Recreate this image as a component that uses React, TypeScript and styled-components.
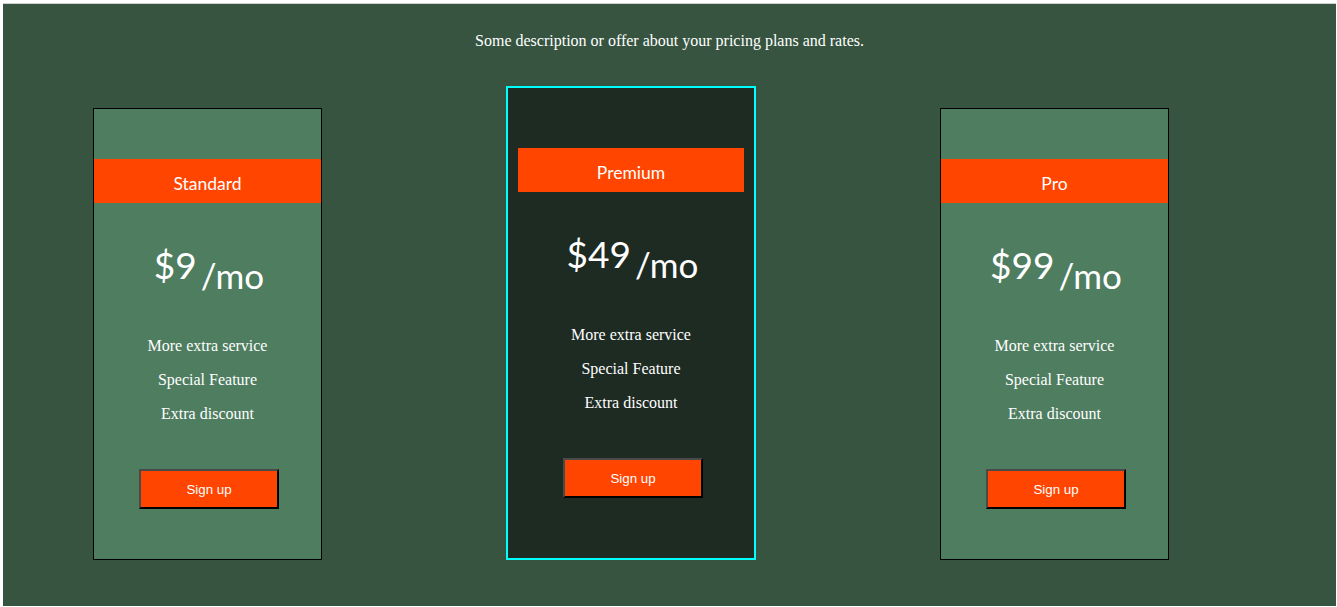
import React from "react";
import styled, { createGlobalStyle } from "styled-components";

const Global = createGlobalStyle`
  html, body { margin: 0; padding: 0; background: #ffffff; }
  body { padding: 3px 1px 1px 3px; }
  * { box-sizing: border-box; }
`;

const Section = styled.section`
  height: 603px;
  background: #365440;
  border-top: 1px solid #d0d0d0;
  display: flex;
  flex-direction: column;
  padding-top: 28px;
`;

const Description = styled.p`
  margin: 0;
  text-align: center;
  color: #ffffff;
  font-family: "Liberation Serif", "Times New Roman", serif;
  font-size: 16px;
  line-height: 18px;
`;

const Row = styled.div`
  display: flex;
  align-items: flex-end;
  gap: 184px;
  padding-left: 90px;
  margin-top: 36px;
`;

const Card = styled.div<{ $featured?: boolean }>`
  width: ${(p) => (p.$featured ? 250 : 229)}px;
  padding: ${(p) => (p.$featured ? "10px" : "0")};
  border: ${(p) => (p.$featured ? "2px solid #00ffff" : "1px solid #000000")};
  background: ${(p) => (p.$featured ? "#1e2b23" : "#4e7d5f")};
  display: flex;
  flex-direction: column;
  align-items: stretch;
`;

const Inner = styled.div`
  height: 450px;
  display: flex;
  flex-direction: column;
  align-items: stretch;
  padding-top: 50px;
`;

const Header = styled.div`
  height: 44px;
  padding-top: 6px;
  line-height: 38px;
  background: #ff4500;
  color: #ffffff;
  text-align: center;
  font-family: Lato, "Noto Sans", sans-serif;
  font-size: 17.5px;
`;

const Price = styled.div`
  margin-top: 39px;
  height: 87px;
  padding-left: 3px;
  text-align: center;
  color: #ffffff;
  font-family: Lato, "Noto Sans", sans-serif;
  font-size: 37px;
  line-height: 46px;
`;

const Per = styled.span`
  vertical-align: -10px;
  margin-left: 4px;
  font-size: 35px;
`;

const Features = styled.ul`
  list-style: none;
  margin: 0;
  padding: 0;
  text-align: center;
  color: #ffffff;
  font-family: "Liberation Serif", "Times New Roman", serif;
  font-size: 16px;
`;

const Feature = styled.li`
  height: 34px;
  line-height: 34px;
`;

const SignUp = styled.button`
  margin: 38px 0 0 45px;
  align-self: flex-start;
  width: 140px;
  height: 40px;
  background: #ff4500;
  color: #ffffff;
  font-family: "Liberation Sans", Arial, sans-serif;
  font-size: 13.33px;
  border-style: solid;
  border-width: 2px;
  border-color: #4a4a4a #000000 #000000 #4a4a4a;
  padding: 0;
  cursor: pointer;
`;

const plans = [
  { name: "Standard", price: "$9" },
  { name: "Premium", price: "$49", featured: true },
  { name: "Pro", price: "$99" },
];

const features = ["More extra service", "Special Feature", "Extra discount"];

export default function App() {
  return (
    <>
      <Global />
      <Section>
        <Description>Some description or offer about your pricing plans and rates.</Description>
        <Row>
          {plans.map((p) => (
            <Card key={p.name} $featured={p.featured}>
              <Inner>
                <Header>{p.name}</Header>
                <Price>
                  {p.price}
                  <Per>/mo</Per>
                </Price>
                <Features>
                  {features.map((f) => (
                    <Feature key={f}>{f}</Feature>
                  ))}
                </Features>
                <SignUp>Sign up</SignUp>
              </Inner>
            </Card>
          ))}
        </Row>
      </Section>
    </>
  );
}
